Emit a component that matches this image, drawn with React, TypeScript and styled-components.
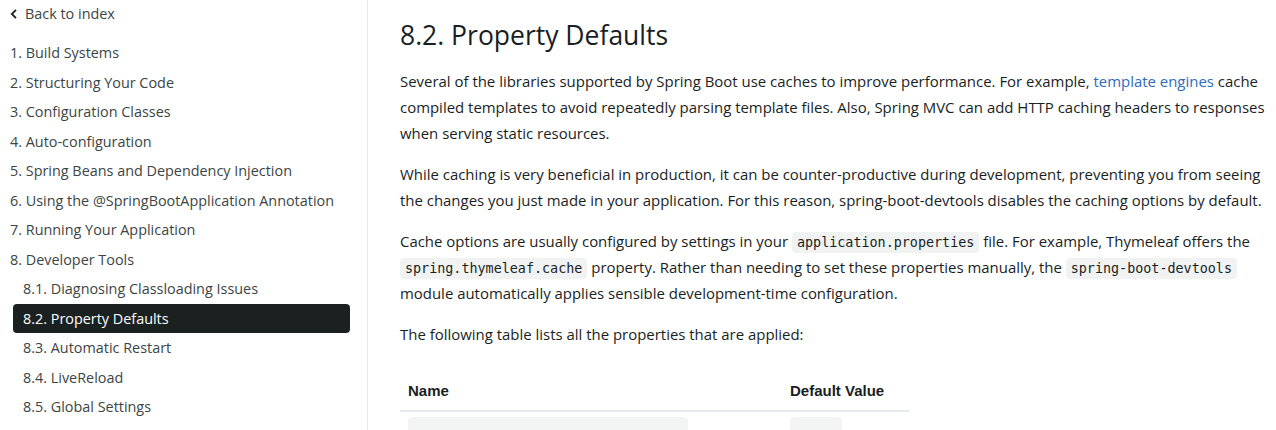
import styled, { createGlobalStyle } from "styled-components";

const GlobalStyle = createGlobalStyle`
  html, body {
    margin: 0;
    padding: 0;
    background: #ffffff;
    overflow: hidden;
  }
  body {
    font-family: "Open Sans", "Noto Sans", sans-serif;
    color: #191e1e;
  }
`;

const Layout = styled.div`
  display: flex;
  height: 430px;
  overflow: hidden;
`;

const Sidebar = styled.nav`
  flex: 0 0 368px;
  border-right: 1px solid #e6e9e9;
  padding: 3px 17px 0 10px;
  box-sizing: border-box;
  font-size: 14.4px;
  color: #3c4545;
`;

const BackLink = styled.a`
  display: flex;
  align-items: center;
  gap: 7px;
  height: 21px;
  color: #3c4545;
  text-decoration: none;
  margin-bottom: 14px;
`;

const NavList = styled.ul`
  list-style: none;
  margin: 0;
  padding: 0;
`;

const NavItem = styled.li<{ $sub?: boolean; $active?: boolean }>`
  height: 29.5px;
  line-height: 29.5px;
  margin-left: ${(p) => (p.$sub ? "3px" : "0")};
  padding-left: ${(p) => (p.$sub ? "10px" : "0")};
  border-radius: 4px;
  background: ${(p) => (p.$active ? "#1b2121" : "transparent")};
  color: ${(p) => (p.$active ? "#ffffff" : "#3c4545")};
  white-space: nowrap;
`;

const Main = styled.main`
  flex: 1;
  padding: 0 0 0 32px;
  min-width: 0;
`;

const Article = styled.article`
  width: 880px;
`;

const Heading = styled.h2`
  font-size: 26.5px;
  font-weight: 500;
  margin: 17px 0 15px;
  line-height: 36px;
  color: #191e1e;
`;

const Para = styled.p`
  font-size: 14.95px;
  line-height: 26px;
  margin: 0 0 15px;
  color: #191e1e;
`;

const Link = styled.a`
  color: #2d6dbb;
  text-decoration: none;
`;

const Code = styled.code`
  font-family: "DejaVu Sans Mono", "Liberation Mono", monospace;
  font-size: 13.4px;
  line-height: 1;
  background: #f1f3f3;
  border-radius: 4px;
  padding: 3px 5px;
  color: #191e1e;
`;

const Table = styled.table`
  margin-top: 35px;
  border-collapse: collapse;
  table-layout: fixed;
  width: 509px;
`;

const Th = styled.th<{ $w?: string }>`
  text-align: left;
  font-weight: 700;
  padding: 0 8px 11px;
  width: ${(p) => p.$w ?? "auto"};
  border-bottom: 2px solid #e6e9ec;
  font-family: "Liberation Sans", Arial, sans-serif;
  font-size: 15px;
  color: #191e1e;
`;

const Td = styled.td`
  padding: 5px 8px;
`;

const CellCode = styled.div<{ $w: number }>`
  width: ${(p) => p.$w}px;
  height: 26px;
  background: #f3f4f4;
  border-radius: 4px;
`;

const ChevronLeft = () => (
  <svg width="8" height="12" viewBox="0 0 8 12" fill="none">
    <path d="M6 1.8 L1.8 6 L6 10.2" stroke="#1b2121" strokeWidth="1.8" />
  </svg>
);

const navItems = [
  { label: "1. Build Systems" },
  { label: "2. Structuring Your Code" },
  { label: "3. Configuration Classes" },
  { label: "4. Auto-configuration" },
  { label: "5. Spring Beans and Dependency Injection" },
  { label: "6. Using the @SpringBootApplication Annotation" },
  { label: "7. Running Your Application" },
  { label: "8. Developer Tools" },
  { label: "8.1. Diagnosing Classloading Issues", sub: true },
  { label: "8.2. Property Defaults", sub: true, active: true },
  { label: "8.3. Automatic Restart", sub: true },
  { label: "8.4. LiveReload", sub: true },
  { label: "8.5. Global Settings", sub: true },
];

export default function App() {
  return (
    <>
      <GlobalStyle />
      <Layout>
        <Sidebar>
          <BackLink href="#">
            <ChevronLeft />
            Back to index
          </BackLink>
          <NavList>
            {navItems.map((item) => (
              <NavItem key={item.label} $sub={item.sub} $active={item.active}>
                {item.label}
              </NavItem>
            ))}
          </NavList>
        </Sidebar>
        <Main>
          <Article>
            <Heading>8.2. Property Defaults</Heading>
            <Para>
              Several of the libraries supported by Spring Boot use caches to improve performance. For example,{" "}
              <Link href="#">template engines</Link> cache compiled templates to avoid repeatedly parsing template
              files. Also, Spring MVC can add HTTP caching headers to responses when serving static resources.
            </Para>
            <Para>
              While caching is very beneficial in production, it can be counter-productive during development,
              preventing you from seeing the changes you just made in your application. For this reason,
              spring-boot-devtools disables the caching options by default.
            </Para>
            <Para>
              Cache options are usually configured by settings in your <Code>application.properties</Code> file. For
              example, Thymeleaf offers the <Code>spring.thymeleaf.cache</Code> property. Rather than needing to set
              these properties manually, the <Code>spring-boot-devtools</Code> module automatically applies sensible
              development-time configuration.
            </Para>
            <Para>The following table lists all the properties that are applied:</Para>
            <Table>
              <thead>
                <tr>
                  <Th $w="366px">Name</Th>
                  <Th>Default Value</Th>
                </tr>
              </thead>
              <tbody>
                <tr>
                  <Td>
                    <CellCode $w={280} />
                  </Td>
                  <Td>
                    <CellCode $w={52} />
                  </Td>
                </tr>
              </tbody>
            </Table>
          </Article>
        </Main>
      </Layout>
    </>
  );
}
